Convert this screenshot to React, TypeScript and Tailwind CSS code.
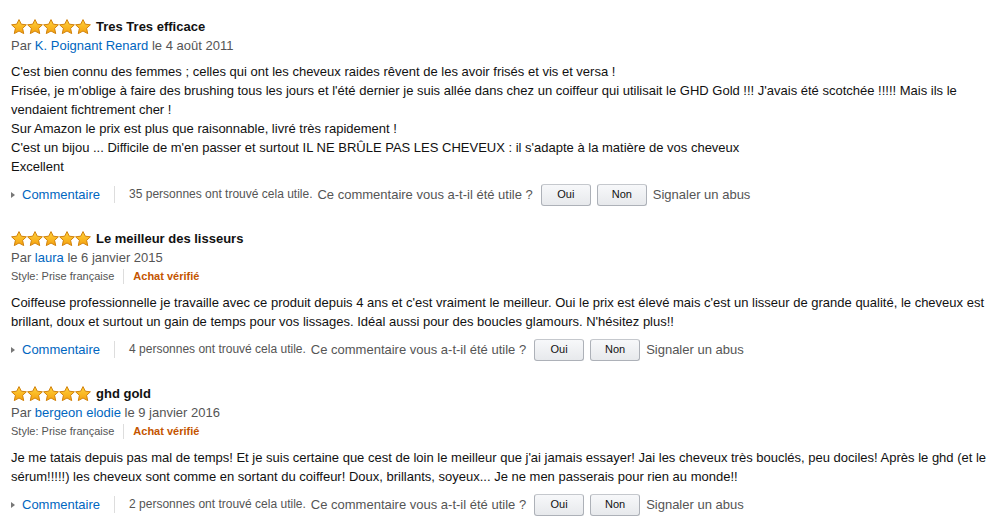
const reviews = [
  {
    title: "Tres Tres efficace",
    author: "K. Poignant Renard",
    date: "le 4 août 2011",
    style: false,
    body: [
      "C'est bien connu des femmes ; celles qui ont les cheveux raides rêvent de les avoir frisés et vis et versa !",
      "Frisée, je m'oblige à faire des brushing tous les jours et l'été dernier je suis allée dans chez un coiffeur qui utilisait le GHD Gold !!! J'avais été scotchée !!!!! Mais ils le vendaient fichtrement cher !",
      "Sur Amazon le prix est plus que raisonnable, livré très rapidement !",
      "C'est un bijou ... Difficile de m'en passer et surtout IL NE BRÛLE PAS LES CHEVEUX : il s'adapte à la matière de vos cheveux",
      "Excellent",
    ],
    helpful: "35 personnes ont trouvé cela utile.",
  },
  {
    title: "Le meilleur des lisseurs",
    author: "laura",
    date: "le 6 janvier 2015",
    style: true,
    body: [
      "Coiffeuse professionnelle je travaille avec ce produit depuis 4 ans et c'est vraiment le meilleur. Oui le prix est élevé mais c'est un lisseur de grande qualité, le cheveux est brillant, doux et surtout un gain de temps pour vos lissages. Idéal aussi pour des boucles glamours. N'hésitez plus!!",
    ],
    helpful: "4 personnes ont trouvé cela utile.",
  },
  {
    title: "ghd gold",
    author: "bergeon elodie",
    date: "le 9 janvier 2016",
    style: true,
    body: [
      "Je me tatais depuis pas mal de temps! Et je suis certaine que cest de loin le meilleur que j'ai jamais essayer! Jai les cheveux très bouclés, peu dociles! Après le ghd (et le sérum!!!!!) les cheveux sont comme en sortant du coiffeur! Doux, brillants, soyeux... Je ne men passerais pour rien au monde!!",
    ],
    helpful: "2 personnes ont trouvé cela utile.",
  },
];

function Star({ id }: { id: string }) {
  return (
    <svg width="16" height="16" viewBox="0 0 16 16">
      <defs>
        <linearGradient id={id} x1="0" y1="0" x2="0" y2="1">
          <stop offset="0" stopColor="#ffd23c" />
          <stop offset="1" stopColor="#f5a10e" />
        </linearGradient>
      </defs>
      <path
        d="M8 0.6 L10.3 5.2 L15.4 5.8 L11.6 9.3 L12.7 14.6 L8 12 L3.3 14.6 L4.4 9.3 L0.6 5.8 L5.7 5.2 Z"
        fill={`url(#${id})`}
        stroke="#d1820c"
        strokeWidth="1"
        strokeLinejoin="round"
      />
    </svg>
  );
}

function Button({ label }: { label: string }) {
  return (
    <span className="inline-flex h-[22px] w-[50px] items-center justify-center rounded-[3px] border border-[#adb1b8] border-t-[#c5c8cd] bg-gradient-to-b from-[#f7f8fa] to-[#e7e9ec] text-[11px] text-[#111]">
      {label}
    </span>
  );
}

export default function App() {
  return (
    <div
      className="bg-white pl-[11px] pr-[2px] pt-[17px] text-[13px] leading-[19px] text-[#111]"
      style={{ fontFamily: '"Liberation Sans", Arial, sans-serif' }}
    >
      {reviews.map((r, i) => (
        <div key={i} className="mb-[23px]">
          <div className="flex h-[19px] items-center">
            <span className="flex">
              {[0, 1, 2, 3, 4].map((s) => (
                <Star key={s} id={`g${i}${s}`} />
              ))}
            </span>
            <span className="ml-[5px] font-bold">{r.title}</span>
          </div>
          <div className="text-[#555]">
            Par <span className="text-[#0066c0]">{r.author}</span> {r.date}
          </div>
          {r.style && (
            <div className="flex h-[19px] items-center text-[11px]">
              <span className="text-[#555]">Style: Prise française</span>
              <span className="mx-[9px] h-[15px] w-px bg-[#ddd]" />
              <span className="font-bold text-[#c45500]">Achat vérifié</span>
            </div>
          )}
          <div className="mt-[7px]">
            {r.body.map((line, k) => (
              <div key={k}>{line}</div>
            ))}
          </div>
          <div className="mt-[7px] flex h-[23px] items-center">
            <span className="mr-[7px] h-0 w-0 border-y-[3.5px] border-l-[4px] border-y-transparent border-l-[#777]" />
            <span className="text-[#0066c0]">Commentaire</span>
            <span className="mx-[14px] h-[17px] w-px bg-[#ddd]" />
            <span className="text-[12px] text-[#555]">{r.helpful}</span>
            <span className="ml-[5px] text-[#555]">Ce commentaire vous a-t-il été utile ?</span>
            <span className="ml-[8px] flex gap-[6px]">
              <Button label="Oui" />
              <Button label="Non" />
            </span>
            <span className="ml-[6px] text-[#555]">Signaler un abus</span>
          </div>
        </div>
      ))}
    </div>
  );
}
